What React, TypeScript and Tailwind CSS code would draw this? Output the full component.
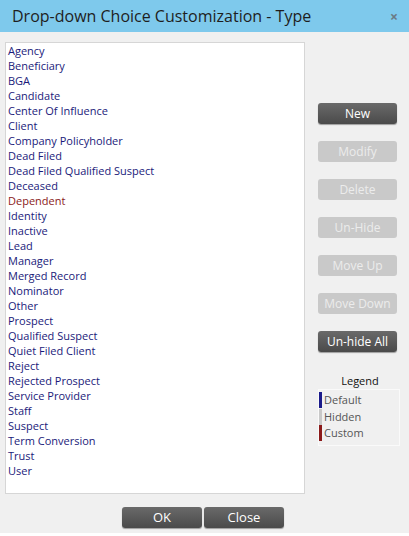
import React from 'react';

const items = [
  'Agency', 'Beneficiary', 'BGA', 'Candidate', 'Center Of Influence', 'Client',
  'Company Policyholder', 'Dead Filed', 'Dead Filed Qualified Suspect', 'Deceased',
  'Dependent', 'Identity', 'Inactive', 'Lead', 'Manager', 'Merged Record', 'Nominator',
  'Other', 'Prospect', 'Qualified Suspect', 'Quiet Filed Client', 'Reject',
  'Rejected Prospect', 'Service Provider', 'Staff', 'Suspect', 'Term Conversion', 'Trust', 'User',
];

const custom = ['Dependent'];

const actions = [
  { label: 'New', enabled: true },
  { label: 'Modify', enabled: false },
  { label: 'Delete', enabled: false },
  { label: 'Un-Hide', enabled: false },
  { label: 'Move Up', enabled: false },
  { label: 'Move Down', enabled: false },
  { label: 'Un-hide All', enabled: true },
];

const Btn = ({ label, enabled, className = '' }: { label: string; enabled: boolean; className?: string }) => (
  <button
    className={
      'h-[21px] rounded-[3px] text-[12px] leading-[21px] text-center ' +
      (enabled
        ? 'bg-gradient-to-b from-[#6a6a6a] to-[#4a4a4a] text-white shadow-[0_1px_1px_rgba(0,0,0,0.35)] '
        : 'bg-[#c9c9c9] text-[#ececec] ') +
      className
    }
  >
    {label}
  </button>
);

export default function App() {
  return (
    <div className="w-[409px] h-[536px] bg-[#f0f0f0] flex flex-col" style={{ fontFamily: '"Open Sans", sans-serif' }}>
      <div className="h-[32px] bg-[#7ec9ec] flex items-center justify-between pl-[12px] pr-[11px] shrink-0">
        <span className="text-[16px] text-[#1e1e1e]">Drop-down Choice Customization - Type</span>
        <span className="text-[14px] text-[#6b7a85] font-bold">×</span>
      </div>
      <div className="flex pt-[10px] pl-[5px]">
        <div className="w-[300px] h-[452px] bg-white border border-[#d6d6d6] pl-[2px] text-[11px] leading-[15px]">
          {items.map((it) => (
            <div key={it} className={custom.includes(it) ? 'text-[#8b1a1a]' : 'text-[#1a1a7a]'}>
              {it}
            </div>
          ))}
        </div>
        <div className="flex flex-col pl-[13px] pt-[61px]">
          <div className="flex flex-col gap-[17px]">
            {actions.map((a) => (
              <Btn key={a.label} label={a.label} enabled={a.enabled} className="w-[79px]" />
            ))}
          </div>
          <div className="mt-[21px] w-[82px]">
            <div className="text-center text-[11px] leading-[16px] text-[#111] pl-[2px]">Legend</div>
            <div className="border border-[#fafafa] text-[11px] leading-[16.5px] text-[#555] pt-[2px] pb-[3px]">
              <div className="flex items-center"><span className="w-[3px] h-[16px] bg-[#1a1a8a] mr-[2px]" />Default</div>
              <div className="flex items-center"><span className="w-[3px] h-[16px] bg-[#c8c8c8] mr-[2px]" />Hidden</div>
              <div className="flex items-center"><span className="w-[3px] h-[16px] bg-[#8b1a1a] mr-[2px]" />Custom</div>
            </div>
          </div>
        </div>
      </div>
      <div className="flex justify-center gap-[2px] pt-[13px] pr-[3px]">
        <Btn label="OK" enabled className="w-[80px] text-[13px]" />
        <Btn label="Close" enabled className="w-[80px] text-[13px]" />
      </div>
      <div className="mt-auto h-[3px] bg-white" />
    </div>
  );
}
